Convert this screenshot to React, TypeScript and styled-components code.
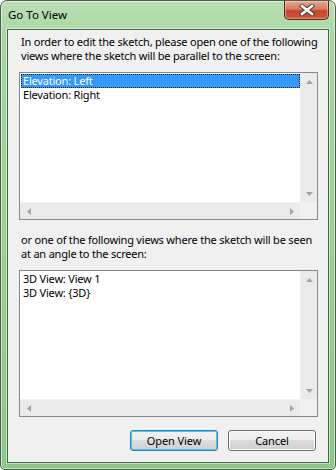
import React from "react";
import styled, { createGlobalStyle } from "styled-components";

const GlobalStyle = createGlobalStyle`
  html, body {
    margin: 0;
    padding: 0;
    background: #ffffff;
  }
  * {
    box-sizing: border-box;
  }
`;

const FONT = `"Noto Sans", "Open Sans", Arial, sans-serif`;

function Arrow({ dir }: { dir: "up" | "down" | "left" | "right" }) {
  const pts = {
    up: "0,4 7,4 3.5,0",
    down: "0,0 7,0 3.5,4",
    left: "4,0 4,7 0,3.5",
    right: "0,0 0,7 4,3.5",
  }[dir];
  const vertical = dir === "up" || dir === "down";
  return (
    <svg width={vertical ? 7 : 4} height={vertical ? 4 : 7}>
      <polygon points={pts} fill="#a3a3a3" />
    </svg>
  );
}

function ScrollList({ items, selected, height }: { items: string[]; selected?: number; height: number }) {
  return (
    <ListBox $h={height}>
      <ListBody>
        <Items>
          {items.map((it, i) => (
            <Item key={it} $selected={i === selected}>
              {it}
            </Item>
          ))}
        </Items>
        <VScroll>
          <ArrowBtn>
            <Arrow dir="up" />
          </ArrowBtn>
          <ArrowBtn>
            <Arrow dir="down" />
          </ArrowBtn>
        </VScroll>
      </ListBody>
      <HRow>
        <HScroll>
          <ArrowBtn $h>
            <Arrow dir="left" />
          </ArrowBtn>
          <ArrowBtn $h>
            <Arrow dir="right" />
          </ArrowBtn>
        </HScroll>
        <Corner />
      </HRow>
    </ListBox>
  );
}

function CloseIcon() {
  return (
    <svg width="16" height="12" viewBox="0 0 16 12">
      <path d="M3 2 L13 10 M13 2 L3 10" stroke="#3b3b3b" strokeWidth="4.4" strokeLinecap="square" />
      <path d="M3 2 L13 10 M13 2 L3 10" stroke="#ffffff" strokeWidth="2.6" strokeLinecap="square" />
    </svg>
  );
}

export default function App() {
  return (
    <>
      <GlobalStyle />
      <Window>
        <TitleBar>
          <Title>Go To View</Title>
          <CloseButton>
            <CloseIcon />
          </CloseButton>
        </TitleBar>
        <Client>
          <Label>
            In order to edit the sketch, please open one of the following
            <br />
            views where the sketch will be parallel to the screen:
          </Label>
          <ScrollList items={["Elevation: Left", "Elevation: Right"]} selected={0} height={148} />
          <Label $top={13}>
            or one of the following views where the sketch will be seen
            <br />
            at an angle to the screen:
          </Label>
          <ScrollList items={["3D View: View 1", "3D View: {3D}"]} height={147} />
          <Buttons>
            <Button $default>Open View</Button>
            <Button>Cancel</Button>
          </Buttons>
        </Client>
      </Window>
    </>
  );
}

const Window = styled.div`
  width: 336px;
  height: 470px;
  display: flex;
  flex-direction: column;
  border: 1px solid #4b5d4b;
  border-radius: 7px 7px 5px 5px;
  padding: 0 6px 6px 6px;
  background: linear-gradient(180deg, #b9dfb3 0px, #a9d6a2 40px, #97cd90 300px, #8cc686 100%);
  box-shadow: inset 0 0 0 1px rgba(255, 255, 255, 0.55);
  font-family: ${FONT};
`;

const TitleBar = styled.div`
  height: 28px;
  display: flex;
  justify-content: space-between;
  align-items: flex-start;
`;

const Title = styled.div`
  font-size: 11.5px;
  color: #000;
  padding: 6px 0 0 1px;
`;

const CloseButton = styled.div`
  width: 45px;
  height: 19px;
  display: flex;
  align-items: center;
  justify-content: center;
  border: 1px solid #5e2418;
  border-top: none;
  border-radius: 0 0 5px 5px;
  background: linear-gradient(180deg, #e9a791 0%, #d77a60 45%, #c4442a 55%, #cf5a3a 100%);
  box-shadow: inset 0 0 0 1px rgba(255, 255, 255, 0.35);
`;

const Client = styled.div`
  flex: 1;
  display: flex;
  flex-direction: column;
  border: 1px solid #3f6b3f;
  background: #f0f0f0;
  padding: 5px 10px 0 11px;
  box-shadow: 0 0 0 1px rgba(255, 255, 255, 0.5);
`;

const Label = styled.div<{ $top?: number }>`
  font-size: 11px;
  line-height: 14px;
  color: #000;
  padding-left: 2px;
  margin-top: ${(p) => p.$top ?? 0}px;
  margin-bottom: 9px;
  letter-spacing: -0.2px;
  white-space: nowrap;
`;

const ListBox = styled.div<{ $h: number }>`
  height: ${(p) => p.$h}px;
  display: flex;
  flex-direction: column;
  border: 1px solid #828790;
  background: #ffffff;
`;

const ListBody = styled.div`
  flex: 1;
  display: flex;
  min-height: 0;
`;

const Items = styled.div`
  flex: 1;
  padding: 1px 0 0 1px;
`;

const Item = styled.div<{ $selected?: boolean }>`
  height: 14px;
  font-size: 11px;
  line-height: 12px;
  padding-left: 1px;
  letter-spacing: -0.2px;
  color: ${(p) => (p.$selected ? "#ffffff" : "#000000")};
  background: ${(p) => (p.$selected ? "#3399ff" : "transparent")};
  border: 1px dotted ${(p) => (p.$selected ? "#1a1a1a" : "transparent")};
`;

const VScroll = styled.div`
  width: 17px;
  display: flex;
  flex-direction: column;
  justify-content: space-between;
  background: #eaeaea;
  border-left: 1px solid #f2f2f2;
`;

const HRow = styled.div`
  height: 17px;
  display: flex;
`;

const HScroll = styled.div`
  flex: 1;
  display: flex;
  justify-content: space-between;
  background: #eaeaea;
  border-top: 1px solid #f2f2f2;
`;

const Corner = styled.div`
  width: 17px;
  background: #f0f0f0;
`;

const ArrowBtn = styled.div<{ $h?: boolean }>`
  width: ${(p) => (p.$h ? "17px" : "100%")};
  height: 17px;
  display: flex;
  align-items: center;
  justify-content: center;
`;

const Buttons = styled.div`
  display: flex;
  justify-content: flex-end;
  gap: 10px;
  margin-top: 13px;
  padding-right: 2px;
`;

const Button = styled.div<{ $default?: boolean }>`
  width: 88px;
  height: 21px;
  display: flex;
  align-items: center;
  justify-content: center;
  font-size: 11px;
  letter-spacing: -0.1px;
  color: #000;
  border: 1px solid ${(p) => (p.$default ? "#3c7fb1" : "#707070")};
  border-radius: 3px;
  background: linear-gradient(180deg, #f2f2f2 0%, #ebebeb 50%, #dddddd 50%, #cfcfcf 100%);
  box-shadow: inset 0 0 0 1px ${(p) => (p.$default ? "#48c8f6" : "#fbfbfb")};
`;
